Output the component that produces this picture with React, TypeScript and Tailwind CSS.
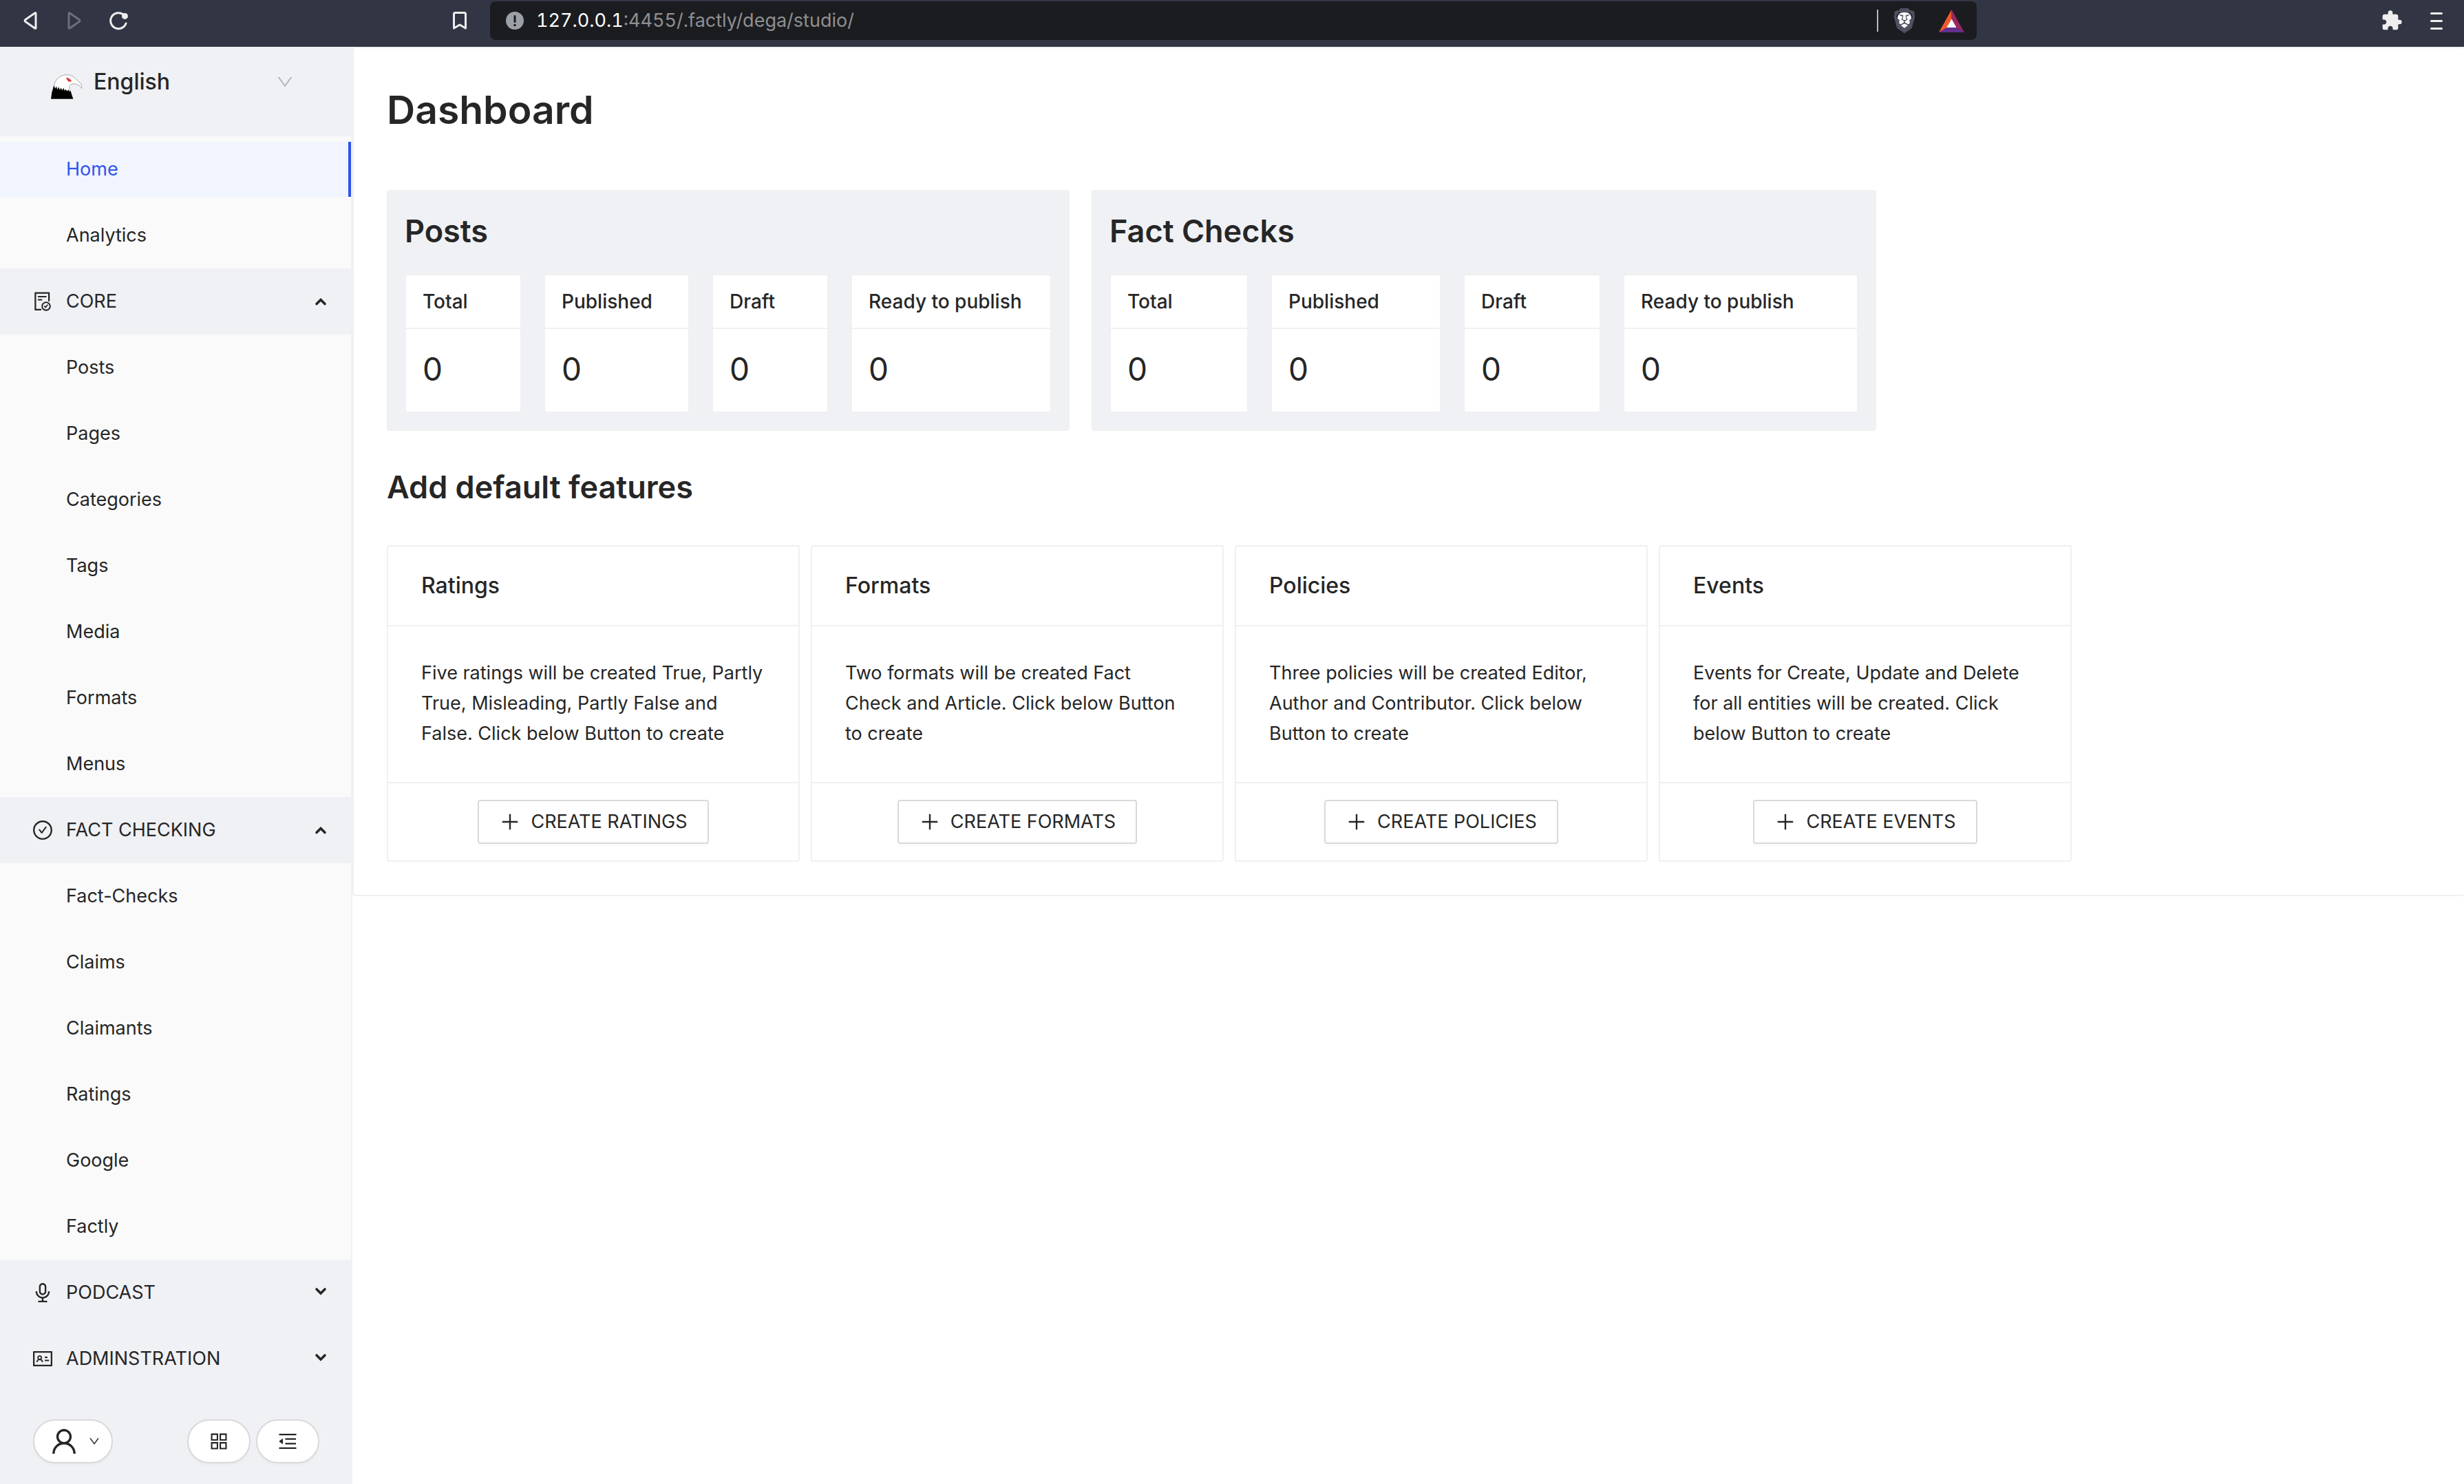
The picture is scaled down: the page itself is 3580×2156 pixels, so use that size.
import type { IconType } from "react-icons";
import { MdExtension } from "react-icons/md";
import { SiBrave } from "react-icons/si";
import {
  AiOutlineAppstore,
  AiOutlineAudio,
  AiOutlineCheckCircle,
  AiOutlineDown,
  AiOutlineFileDone,
  AiOutlineIdcard,
  AiOutlineMenuFold,
  AiOutlinePlus,
  AiOutlineUser,
} from "react-icons/ai";

type Section = { title: string; icon: IconType; items: string[] };

const sections: Section[] = [
  {
    title: "CORE",
    icon: AiOutlineFileDone,
    items: ["Posts", "Pages", "Categories", "Tags", "Media", "Formats", "Menus"],
  },
  {
    title: "FACT CHECKING",
    icon: AiOutlineCheckCircle,
    items: ["Fact-Checks", "Claims", "Claimants", "Ratings", "Google", "Factly"],
  },
  { title: "PODCAST", icon: AiOutlineAudio, items: [] },
  { title: "ADMINSTRATION", icon: AiOutlineIdcard, items: [] },
];

const features = [
  {
    title: "Ratings",
    text: "Five ratings will be created True, Partly True, Misleading, Partly False and False. Click below Button to create",
    action: "CREATE RATINGS",
  },
  {
    title: "Formats",
    text: "Two formats will be created Fact Check and Article. Click below Button to create",
    action: "CREATE FORMATS",
  },
  {
    title: "Policies",
    text: "Three policies will be created Editor, Author and Contributor. Click below Button to create",
    action: "CREATE POLICIES",
  },
  {
    title: "Events",
    text: "Events for Create, Update and Delete for all entities will be created. Click below Button to create",
    action: "CREATE EVENTS",
  },
];

const statLabels = ["Total", "Published", "Draft", "Ready to publish"];

function BackIcon() {
  return (
    <svg className="h-[26px] w-5" viewBox="0 0 20 26" fill="none" stroke="currentColor" strokeWidth="3" strokeLinejoin="round">
      <path d="M18 2.6Q18 1.2 16.6 2.1L3 11.4Q1.2 13 3 14.6L16.6 23.9Q18 24.8 18 23.4Z" />
    </svg>
  );
}

function ReloadIcon() {
  return (
    <svg className="size-7" viewBox="0 0 28 28" fill="none">
      <path d="M20.5 4.6A11.5 11.5 0 1 0 25 18" stroke="currentColor" strokeWidth="3" strokeLinecap="round" />
      <circle cx="23.4" cy="7.4" r="4.5" fill="currentColor" />
    </svg>
  );
}

function BookmarkIcon() {
  return (
    <svg className="h-[26px] w-5" viewBox="0 0 20 26" fill="none" stroke="currentColor" strokeWidth="3" strokeLinejoin="round">
      <path d="M1.5 24V3.5Q1.5 1.5 3.5 1.5H16.5Q18.5 1.5 18.5 3.5V24L10 19Z" />
    </svg>
  );
}

function InfoIcon() {
  return (
    <svg className="size-[26px]" viewBox="0 0 26 26">
      <circle cx="13" cy="13" r="13" fill="#9aa0a6" />
      <path d="M13 6.5V14.5" stroke="#1b1c20" strokeWidth="3" strokeLinecap="round" />
      <circle cx="13" cy="19.5" r="1.8" fill="#1b1c20" />
    </svg>
  );
}

function RewardsIcon() {
  return (
    <svg className="h-[33px] w-[37px]" viewBox="0 0 37 33">
      <path d="M18.5 0L0 33L12 26L18.5 13.5Z" fill="#f15a2d" />
      <path d="M18.5 0L37 33L25 26L18.5 13.5Z" fill="#99275f" />
      <path d="M0 33H37L25 26H12Z" fill="#642f8f" />
      <path d="M18.5 13.5L25.6 26H11.4Z" fill="#fff" />
    </svg>
  );
}

function EagleLogo() {
  return (
    <svg className="h-[37px] w-[47px] shrink-0" viewBox="158 304 142 112">
      <path
        d="M172 368C176 332 200 309 230 309C252 309 264 320 275 332C288 342 299 352 296 369C288 354 268 345 252 350C239 355 240 368 246 384Z"
        fill="#fff"
        stroke="#a6a6a6"
        strokeWidth="3"
      />
      <path d="M228 321Q242 322 252 336Q246 341 238 339Q230 333 228 321Z" fill="#e23b3b" />
      <path
        d="M174 356L180 370L185 359L189 374L195 362L200 376L206 366L210 378L217 367L221 380L227 372L231 382L238 374L243 384L247 378Q252 396 259 415H161Q163 384 174 356Z"
        fill="#000"
      />
    </svg>
  );
}

function Caret({ open }: { open: boolean }) {
  return (
    <svg className="ml-auto size-6" viewBox="0 0 24 24" fill="none" stroke="currentColor" strokeWidth="3.6" strokeLinecap="round">
      <path d={open ? "M6 15.5L12 9.5L18 15.5" : "M6 7L12 13L18 7"} />
    </svg>
  );
}

function BrowserBar() {
  return (
    <header className="grid h-[68px] grid-cols-[712fr_2160fr_708fr] items-start bg-[#323544] pt-0.5 text-[#eeeeee]">
      <div className="flex h-14 items-center pr-[34px] pl-[34px]">
        <button aria-label="Back">
          <BackIcon />
        </button>
        <button aria-label="Forward" className="ml-11 rotate-180 text-[#6c6e7a]">
          <BackIcon />
        </button>
        <button aria-label="Reload" className="ml-10">
          <ReloadIcon />
        </button>
        <button aria-label="Bookmark" className="ml-auto">
          <BookmarkIcon />
        </button>
      </div>
      <div className="flex h-14 items-center rounded-lg bg-[#1b1c20] pr-[18px] pl-[23px]">
        <InfoIcon />
        <div role="textbox" aria-label="Address" className="ml-[18px] flex-1 text-[27px] text-[#8e8f91] tabular-nums">
          <span className="text-white">127.0.0.1</span>:4455/.factly/dega/studio/
        </div>
        <div className="h-8 w-0.5 bg-[#bababa]" />
        <button aria-label="Shields" className="ml-5 grid place-items-center">
          <span className="col-start-1 row-start-1 h-6 w-5 rounded-lg bg-white" />
          <SiBrave className="col-start-1 row-start-1 size-9 text-[#4f5162]" />
        </button>
        <button aria-label="Rewards" className="ml-8">
          <RewardsIcon />
        </button>
      </div>
      <div className="flex h-14 items-center justify-end pr-[31px]">
        <button aria-label="Extensions">
          <MdExtension className="size-8" />
        </button>
        <button aria-label="Menu" className="ml-10 flex flex-col gap-2">
          <span className="h-[3px] w-[18px] rounded-full bg-current" />
          <span className="h-[3px] w-[18px] rounded-full bg-current" />
          <span className="h-[3px] w-[18px] rounded-full bg-current" />
        </button>
      </div>
    </header>
  );
}

function NavLink({ label, active = false }: { label: string; active?: boolean }) {
  return (
    <li className="py-2">
      <a
        href="#"
        className={
          active
            ? "flex h-20 items-center border-r-4 border-[#2f54eb] bg-[#f0f5ff] pl-24 text-[#2f54eb]"
            : "flex h-20 items-center pl-24"
        }
      >
        {label}
      </a>
    </li>
  );
}

function Sidebar() {
  return (
    <aside className="flex w-[512px] shrink-0 flex-col border-r-2 border-[#f0f0f0] bg-[#f0f1f5] text-[27px]">
      <div className="flex h-[130px] items-start pt-[18px] pr-[82px] pl-[73px]">
        <div className="flex h-[66px] flex-1 items-center">
          <span className="pt-3">
            <EagleLogo />
          </span>
          <select aria-label="Space" className="ml-4 h-full flex-1 appearance-none bg-transparent text-[32px] font-medium outline-none">
            <option>English</option>
          </select>
          <AiOutlineDown className="size-7 text-[#b8b9bc]" />
        </div>
      </div>
      <nav>
        <ul className="bg-[#fafafa]">
          <NavLink label="Home" active />
          <NavLink label="Analytics" />
        </ul>
        {sections.map(({ title, icon: Icon, items }) => (
          <div key={title}>
            <button className="flex h-24 w-full items-center gap-[18px] pr-8 pl-[46px]">
              <Icon className="size-8" />
              {title}
              <Caret open={items.length > 0} />
            </button>
            <ul className="bg-[#fafafa]">
              {items.map((item) => (
                <NavLink key={item} label={item} />
              ))}
            </ul>
          </div>
        ))}
      </nav>
      <div className="mt-10 flex gap-2 pr-[46px] pb-[30px] pl-12">
        <button
          aria-label="Account"
          className="mr-auto flex h-16 w-[116px] items-center gap-3 rounded-full border-2 border-[#d9d9d9] bg-white pl-5 shadow-[0_4px_0_rgba(0,0,0,0.016)]"
        >
          <AiOutlineUser className="size-[46px]" />
          <AiOutlineDown className="size-[18px]" />
        </button>
        <button
          aria-label="Applications"
          className="grid h-16 w-[92px] place-items-center rounded-full border-2 border-[#d9d9d9] bg-white shadow-[0_4px_0_rgba(0,0,0,0.016)]"
        >
          <AiOutlineAppstore className="size-8" />
        </button>
        <button
          aria-label="Collapse menu"
          className="grid h-16 w-[92px] place-items-center rounded-full border-2 border-[#d9d9d9] bg-white shadow-[0_4px_0_rgba(0,0,0,0.016)]"
        >
          <AiOutlineMenuFold className="size-8" />
        </button>
      </div>
    </aside>
  );
}

function StatsCard({ title, columns }: { title: string; columns: string }) {
  return (
    <section className="rounded-[4px] border-2 border-[#f0f0f0] bg-[#f0f1f5] p-6">
      <h2 className="text-[45px] leading-[68px] font-semibold">{title}</h2>
      <div className={columns}>
        {statLabels.map((label) => (
          <div key={label} className="rounded-[4px] border-2 border-[#f0f0f0] bg-white">
            <h3 className="border-b-2 border-[#f0f0f0] px-6 py-4 text-[28px] leading-[44px] font-medium whitespace-nowrap">
              {label}
            </h3>
            <p className="px-6 pt-[26px] pb-[30px] text-[46px] leading-[64px]">0</p>
          </div>
        ))}
      </div>
    </section>
  );
}

export default function App() {
  return (
    <div className="flex min-h-screen flex-col bg-white font-['Inter',sans-serif] text-[#262626]">
      <BrowserBar />
      <div className="flex flex-1">
        <Sidebar />
        <main className="min-w-0 flex-1">
          <div className="rounded-[4px] border-2 border-r-0 border-[#f0f0f0] p-12">
            <h1 className="text-[57px] leading-[84px] font-semibold">Dashboard</h1>
            <div className="mt-[74px] grid max-w-[2164px] grid-cols-[992fr_1140fr] gap-8">
              <StatsCard title="Posts" columns="mt-7 grid grid-cols-[170fr_212fr_170fr_292fr] gap-8" />
              <StatsCard title="Fact Checks" columns="mt-7 grid grid-cols-[202fr_248fr_200fr_342fr] gap-8" />
            </div>
            <h2 className="mt-12 text-[45px] leading-[68px] font-semibold">Add default features</h2>
            <div className="mt-[50px] grid max-w-[2448px] grid-cols-4 gap-4">
              {features.map(({ title, text, action }) => (
                <article key={title} className="flex flex-col rounded-[4px] border-2 border-[#f0f0f0]">
                  <h3 className="border-b-2 border-[#f0f0f0] px-12 py-8 text-[32px] leading-[50px] font-medium">{title}</h3>
                  <p className="flex-1 px-12 pt-[46px] pb-12 text-[27px] leading-[44px]">{text}</p>
                  <div className="flex justify-center border-t-2 border-[#f0f0f0] py-6">
                    <button className="flex h-16 items-center gap-[14px] rounded-[4px] border-2 border-[#d9d9d9] px-[29px] text-[27px] shadow-[0_4px_0_rgba(0,0,0,0.016)]">
                      <AiOutlinePlus className="size-8" />
                      {action}
                    </button>
                  </div>
                </article>
              ))}
            </div>
          </div>
        </main>
      </div>
    </div>
  );
}
